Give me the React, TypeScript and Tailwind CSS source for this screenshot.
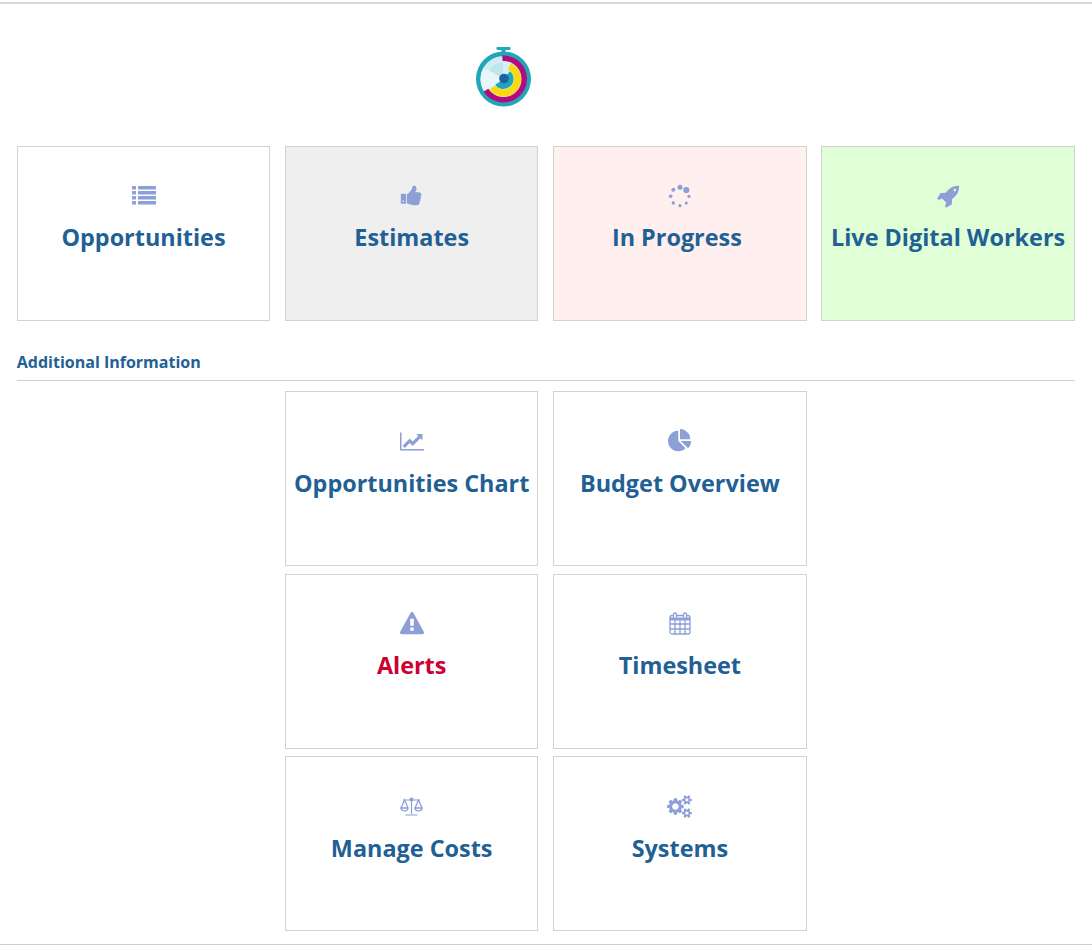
import type { ReactNode } from "react";

const cx = 30.5;
const cy = 33;

function sector(r: number, from: number, to: number) {
  const p = (a: number) => {
    const t = ((a - 90) * Math.PI) / 180;
    return `${(cx + r * Math.cos(t)).toFixed(2)} ${(cy + r * Math.sin(t)).toFixed(2)}`;
  };
  const large = to - from > 180 ? 1 : 0;
  return `M${cx} ${cy}L${p(from)}A${r} ${r} 0 ${large} 1 ${p(to)}Z`;
}

// Stopwatch logo
function Logo() {
  return (
    <svg width="60" height="62" viewBox="0 0 60 62">
      <rect x="23.5" y="1" width="14" height="3" rx="1" fill="#20a9b8" />
      <rect x="28.5" y="3" width="4" height="5" fill="#20a9b8" />
      <circle cx={cx} cy={cy} r="27.5" fill="#1fa6b8" />
      <circle cx={cx} cy={cy} r="23" fill="#cfecf2" />
      <path d={sector(23.5, -3, 238)} fill="#b5097f" />
      <circle cx={cx} cy={cy} r="18" fill="#d8f0f4" />
      <path d={sector(17.5, 25, 232)} fill="#fbd90f" />
      <circle cx={cx} cy={cy} r="10.5" fill="#d8f0f4" />
      <path d={sector(10, 40, 235)} fill="#1fa6b8" />
      <path d={sector(23, 238, 300)} fill="#e6f6f9" />
      <path d={sector(17, 300, 357)} fill="#bfe5ed" />
      <circle cx={cx + 0.5} cy={cy - 0.5} r="4.8" fill="#1f5fa8" />
    </svg>
  );
}

function ListIcon() {
  return (
    <svg width="25" height="19" viewBox="0 0 25 19" fill="currentColor">
      {[0, 5, 10, 15].map((y) => (
        <g key={y}>
          <rect x="1" y={y} width="4" height="3.6" rx="0.5" />
          <rect x="7" y={y} width="18" height="3.6" rx="0.5" />
        </g>
      ))}
    </svg>
  );
}

function ThumbIcon() {
  return (
    <svg width="23" height="23" viewBox="0 0 1792 1792" fill="currentColor">
      <path d="M320 1344q0-26-19-45t-45-19q-27 0-45.5 19t-18.5 45q0 27 18.5 45.5t45.5 18.5q26 0 45-18.5t19-45.5zm160-512v640q0 26-19 45t-45 19h-288q-26 0-45-19t-19-45v-640q0-26 19-45t45-19h288q26 0 45 19t19 45zm1184 0q0 86-55 149 15 44 15 76 3 76-43 137 17 56 0 117-15 57-54 94 9 112-49 181-64 76-197 78h-129q-66 0-144-15.5t-121.5-29-120.5-39.5q-123-43-158-44-26-1-45-19.5t-19-44.5v-641q0-25 18-43.5t43-20.5q24-2 76-59t101-121q68-87 101-120 18-18 31-48t17.5-48.5 13.5-60.5q7-39 12.5-61t19.5-52 34-50q19-19 45-19 46 0 82.5 10.5t60 26 40 40.5 24 45 12 50 5 45 .5 39q0 38-9.5 76t-19 60-27.5 56q-3 6-10 18t-11 22-8 24h277q78 0 135 57t57 135z" />
    </svg>
  );
}

function SpinnerIcon() {
  return (
    <svg width="24" height="24" viewBox="0 0 24 24" fill="currentColor">
      <circle cx="18.3" cy="6" r="3.1" />
      <circle cx="12" cy="3.3" r="2.5" />
      <circle cx="5.3" cy="5.7" r="2" />
      <circle cx="2.7" cy="12.3" r="1.8" />
      <circle cx="5.3" cy="19" r="1.7" />
      <circle cx="12" cy="21.7" r="1.6" />
      <circle cx="18.3" cy="19" r="1.6" />
      <circle cx="21" cy="12.3" r="1.6" />
    </svg>
  );
}

function RocketIcon() {
  return (
    <svg width="24" height="24" viewBox="0 0 1792 1792" fill="currentColor">
      <path d="M1504 448q0-40-28-68t-68-28-68 28-28 68 28 68 68 28 68-28 28-68zm224-288q0 249-75.5 430.5t-253.5 360.5q-81 80-195 176l-20 379q-2 16-16 26l-384 224q-7 4-16 4-12 0-23-9l-64-64q-13-14-8-32l85-276-281-281-276 85q-3 1-9 1-14 0-23-9l-64-64q-17-19-5-39l224-384q10-14 26-16l379-20q96-114 176-195 188-187 358-258t431-71q14 0 24 9.5t10 22.5z" />
    </svg>
  );
}

function LineChartIcon() {
  return (
    <svg width="24" height="21" viewBox="0 0 2048 1792" fill="currentColor">
      <path d="M2048 1536v128h-2048v-1536h128v1408h1920zm-128-1248v435q0 21-19.5 29.5t-35.5-7.5l-121-121-633 633q-10 10-23 10t-23-10l-233-233-416 416-192-192 585-585q10-10 23-10t23 10l233 233 464-464-121-121q-16-16-7.5-35.5t29.5-19.5h435q14 0 23 9t9 23z" />
    </svg>
  );
}

function PieIcon() {
  return (
    <svg width="24" height="24" viewBox="0 0 1792 1792" fill="currentColor">
      <path d="M768 890l546 546q-106 108-247.5 168t-298.5 60q-209 0-385.5-103t-279.5-279.5-103-385.5 103-385.5 279.5-279.5 385.5-103v762zm187 6h773q0 157-60 298.5t-168 247.5zm709-128h-768v-768q209 0 385.5 103t279.5 279.5 103 385.5z" />
    </svg>
  );
}

function WarningIcon() {
  return (
    <svg width="24" height="24" viewBox="0 0 1792 1792" fill="currentColor">
      <path d="M1024 1375v-190q0-14-9.5-23.5t-22.5-9.5h-192q-13 0-22.5 9.5t-9.5 23.5v190q0 14 9.5 23.5t22.5 9.5h192q13 0 22.5-9.5t9.5-23.5zm-2-374l18-459q0-12-10-19-13-11-24-11h-220q-11 0-24 11-10 7-10 21l17 457q0 10 10 16.5t24 6.5h185q14 0 23.5-6.5t10.5-16.5zm-14-934l768 1408q35 63-2 126-17 29-46.5 46t-63.5 17h-1536q-34 0-63.5-17t-46.5-46q-37-63-2-126l768-1408q17-31 47-49t65-18 65 18 47 49z" />
    </svg>
  );
}

function CalendarIcon() {
  return (
    <svg width="22" height="23" viewBox="0 0 22 23" fill="none" stroke="currentColor" strokeWidth="1.3">
      <rect x="1" y="3.5" width="20" height="18.5" rx="2" />
      <path d="M1 7H21" strokeWidth="3" />
      <path d="M1 12H21M1 17H21M6 8V22M11 8V22M16 8V22" />
      <rect x="4.5" y="1" width="3" height="5.5" rx="1.5" fill="white" />
      <rect x="14.5" y="1" width="3" height="5.5" rx="1.5" fill="white" />
    </svg>
  );
}

function ScaleIcon() {
  return (
    <svg width="24" height="19" viewBox="0 0 24 19" fill="none" stroke="currentColor" strokeWidth="1.2">
      <path d="M11.5 1V17M5.5 18H17.5M3 3H20" />
      <circle cx="11.5" cy="2.5" r="1.5" fill="currentColor" />
      <path d="M4.5 3L1 11H8ZM18.5 3L15 11H22Z" />
      <path d="M1 11C1.5 15 7.5 15 8 11ZM15 11C15.5 15 21.5 15 22 11Z" />
    </svg>
  );
}

function CogsIcon() {
  return (
    <svg width="25" height="23" viewBox="0 0 1920 1792" fill="currentColor">
      <path d="M896 896q0-106-75-181t-181-75-181 75-75 181 75 181 181 75 181-75 75-181zm768 512q0-52-38-90t-90-38-90 38-38 90q0 53 37.5 90.5t90.5 37.5 90.5-37.5 37.5-90.5zm0-1024q0-52-38-90t-90-38-90 38-38 90q0 53 37.5 90.5t90.5 37.5 90.5-37.5 37.5-90.5zm-384 421v185q0 10-7 19.5t-16 10.5l-155 24q-11 35-32 76 34 48 90 115 7 11 7 20 0 12-7 19-23 30-82.5 89.5t-78.5 59.5q-11 0-21-7l-115-90q-37 19-77 31-11 108-23 155-7 24-30 24h-186q-11 0-20-7.5t-10-17.5l-23-153q-34-10-75-31l-118 89q-7 7-20 7-11 0-21-8-144-133-144-160 0-9 7-19 10-14 41-53t47-61q-23-44-35-82l-152-24q-10-1-17-9.5t-7-19.5v-185q0-10 7-19.5t16-10.5l155-24q11-35 32-76-34-48-90-115-7-11-7-20 0-12 7-20 22-30 82-89t79-59q11 0 21 7l115 90q34-18 77-32 11-108 23-154 7-24 30-24h186q11 0 20 7.5t10 17.5l23 153q34 10 75 31l118-89q8-7 20-7 11 0 21 8 144 133 144 160 0 8-7 19-12 16-42 54t-45 60q23 48 34 82l152 23q10 2 17 10.5t7 19.5zm640 533v140q0 16-149 31-12 27-30 52 51 113 51 138 0 4-4 7-122 71-124 71-8 0-46-47t-52-68q-20 2-30 2t-30-2q-14 21-52 68t-46 47q-2 0-124-71-4-3-4-7 0-25 51-138-18-25-30-52-149-15-149-31v-140q0-16 149-31 13-29 30-52-51-113-51-138 0-4 4-7 4-2 35-20t59-34 30-16q8 0 46 46.5t52 67.5q20-2 30-2t30 2q51-71 92-112l6-2q4 0 124 70 4 3 4 7 0 25-51 138 17 23 30 52 149 15 149 31zm0-1024v140q0 16-149 31-12 27-30 52 51 113 51 138 0 4-4 7-122 71-124 71-8 0-46-47t-52-68q-20 2-30 2t-30-2q-14 21-52 68t-46 47q-2 0-124-71-4-3-4-7 0-25 51-138-18-25-30-52-149-15-149-31v-140q0-16 149-31 13-29 30-52-51-113-51-138 0-4 4-7 4-2 35-20t59-34 30-16q8 0 46 46.5t52 67.5q20-2 30-2t30 2q51-71 92-112l6-2q4 0 124 70 4 3 4 7 0 25-51 138 17 23 30 52 149 15 149 31z" />
    </svg>
  );
}

function Card({ icon, label, bg = "bg-white", text = "text-[#1f6095]", shift = "" }: { icon: ReactNode; label: string; bg?: string; text?: string; shift?: string }) {
  return (
    <div className={`${bg} h-[175px] border border-[#d2d2d2] flex flex-col items-center pt-[36px]`}>
      <div className="h-[26px] flex items-center justify-center text-[#8c9fd6]">{icon}</div>
      <div className={`mt-[12.5px] text-[23.4px] leading-[32px] font-bold whitespace-nowrap ${text} ${shift}`}>{label}</div>
    </div>
  );
}

export default function App() {
  return (
    <div className="h-[945px] w-[1092px] bg-white font-['Open_Sans',sans-serif] overflow-hidden">
      <div className="mt-[2px] h-[943px] border-t-2 border-b border-t-[#d6d6d6] border-b-[#cfcfcf] pl-[16.8px] pr-[17.25px] flex flex-col">
        <div className="h-[141.6px] pl-[456.2px] pt-[42px]">
          <Logo />
        </div>
        <div className="grid grid-cols-4 gap-x-[14.85px]">
          <Card icon={<ListIcon />} label="Opportunities" />
          <Card icon={<ThumbIcon />} label="Estimates" bg="bg-[#efefef]" />
          <Card icon={<SpinnerIcon />} label="In Progress" bg="bg-[#ffefef]" shift="pr-[6px]" />
          <Card icon={<RocketIcon />} label="Live Digital Workers" bg="bg-[#e0ffd6]" />
        </div>
        <div className="mt-[29.5px] h-[31px] border-b border-[#cfcfcf] text-[16px] leading-[24px] font-bold text-[#1f6095]">
          Additional Information
        </div>
        <div className="mt-[10px] grid grid-cols-4 gap-x-[14.85px] gap-y-[7.6px]">
          <div />
          <Card icon={<LineChartIcon />} label="Opportunities Chart" />
          <Card icon={<PieIcon />} label="Budget Overview" />
          <div />
          <div />
          <Card icon={<WarningIcon />} label="Alerts" text="text-[#cc0033]" />
          <Card icon={<CalendarIcon />} label="Timesheet" />
          <div />
          <div />
          <Card icon={<ScaleIcon />} label="Manage Costs" />
          <Card icon={<CogsIcon />} label="Systems" />
          <div />
        </div>
      </div>
    </div>
  );
}
